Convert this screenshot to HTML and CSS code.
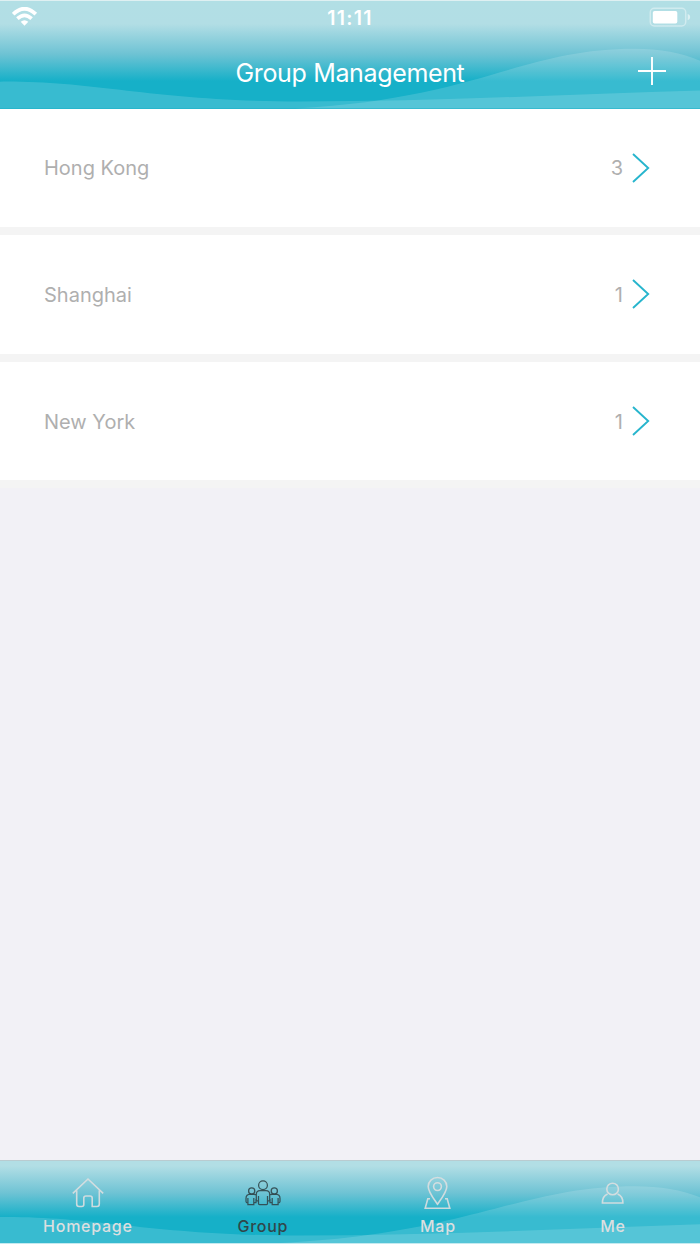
FILE: index.html
```
<!DOCTYPE html>
<html lang="en">
<head>
<meta charset="utf-8">
<title>Group Management</title>
<link rel="stylesheet" href="styles.css">
</head>
<body>
<div class="app">
  <header class="header">
    <svg class="waves" viewBox="0 0 700 108" preserveAspectRatio="none">
      <path d="M0 81C95 80 155 101 300 101C430 101 560 94 700 90V108H0Z"/>
      <path d="M295 108C480 98 520 48 635 48C660 48 682 52 700 60V108Z"/>
    </svg>
    <div class="status">
      <svg class="wifi" width="26" height="20" viewBox="0 0 26 20">
        <path class="arc" d="M1.2 7.2Q12.5 -3.8 23.8 7.2"/>
        <path class="arc" d="M5.4 11.7Q12.5 5.1 19.6 11.7"/>
        <path class="dot" d="M8.7 14.8Q12.5 11.8 16.3 14.8L12.5 18.8Z"/>
      </svg>
      <span class="time">11:11</span>
      <svg class="battery" width="42" height="20" viewBox="0 0 42 20">
        <rect class="shell" x="1.3" y="1.3" width="35.4" height="17.6" rx="4"/>
        <rect class="charge" x="3.8" y="4" width="24.5" height="12.5" rx="1.8"/>
        <path class="cap" d="M38.7 7Q41.2 7.5 41.2 10T38.7 13.3Z"/>
      </svg>
    </div>
    <div class="nav">
      <h1 class="title">Group Management</h1>
      <svg class="add" width="28" height="28" viewBox="0 0 28 28"><path d="M14 0V28M0 14H28"/></svg>
    </div>
  </header>
  <main class="list">
    <div class="row"><span class="name">Hong Kong</span><span class="count">3</span><svg class="chevron" width="18" height="30" viewBox="0 0 18 30"><path d="M1 1L16.2 15L1 29"/></svg></div>
    <div class="row"><span class="name">Shanghai</span><span class="count">1</span><svg class="chevron" width="18" height="30" viewBox="0 0 18 30"><path d="M1 1L16.2 15L1 29"/></svg></div>
    <div class="row"><span class="name">New York</span><span class="count">1</span><svg class="chevron" width="18" height="30" viewBox="0 0 18 30"><path d="M1 1L16.2 15L1 29"/></svg></div>
  </main>
  <nav class="tabs">
    <svg class="waves" viewBox="0 20 700 88" preserveAspectRatio="none">
      <path d="M0 80C95 79 155 100 300 100C430 100 560 93 700 88V108H0Z"/>
      <path d="M280 108C470 98 520 47 635 47C660 47 682 51 700 59V108Z"/>
    </svg>
    <a class="tab">
      <svg width="36" height="36" viewBox="0 0 36 36"><path d="M2.8 18.3L18 4L33.2 18.3M6.7 15.5V29Q6.7 31.5 9 31.5H11.8Q13.8 31.5 13.8 29.5V23Q13.8 21 16 21H20Q22.2 21 22.2 23V31.5H27Q29.3 31.5 29.3 29V15.5"/></svg>
      <span>Homepage</span>
    </a>
    <a class="tab active">
      <svg width="36" height="36" viewBox="0 0 36 36">
        <circle cx="18" cy="10.2" r="4.4"/><circle cx="6.7" cy="16" r="3.1"/><circle cx="29.3" cy="16" r="3.1"/>
        <path d="M13.5 20.9V28.5Q13.5 29.5 14.5 29.5H21.5Q22.5 29.5 22.5 28.5V20.9M13.5 25.9H12.3Q11.3 25.9 11.3 24.4V19.4Q11.3 15.5 15 15.5H21Q24.7 15.5 24.7 19.4V24.4Q24.7 25.9 23.7 25.9H22.5M11.3 19.7Q9 19.2 5.5 19.2Q1 19.4 1 23.4V26.4Q1 27.9 2.9 27.9V22.9M2.9 27.9V29.5H8.8V22.9M8.8 27.6H11V24M24.7 19.7Q27 19.2 30.5 19.2Q35 19.4 35 23.4V26.4Q35 27.9 33.1 27.9V22.9M33.1 27.9V29.5H27.2V22.9M27.2 27.6H25V24"/>
      </svg>
      <span>Group</span>
    </a>
    <a class="tab">
      <svg width="36" height="36" viewBox="0 0 36 36"><path d="M17.5 29.2C13.5 23.5 8.2 17 8.2 11.5A9.3 9 0 0 1 26.8 11.5C26.8 17 21.5 23.5 17.5 29.2ZM10 23.7H7.8L5.2 33.2H29.8L27.2 23.7H25"/><circle cx="17.5" cy="11.6" r="3.9"/></svg>
      <span>Map</span>
    </a>
    <a class="tab">
      <svg width="36" height="36" viewBox="0 0 36 36"><circle cx="17.6" cy="14" r="5.8"/><path d="M12.6 19C9 20.4 7.4 23.5 7.4 28H27.9C27.9 23.5 26.2 20.4 22.6 19"/></svg>
      <span>Me</span>
    </a>
  </nav>
</div>
</body>
</html>
```
FILE: styles.css
```
* { box-sizing: border-box; }
body { margin: 0; font-family: Inter, "Liberation Sans", sans-serif; background: #f2f1f6; }
.app { height: 1244px; display: flex; flex-direction: column; }
svg { display: block; flex: none; fill: none; }

.header {
  position: relative;
  height: 108.5px;
  border-top: 1px solid #dff0f2;
  background: linear-gradient(#b2dfe5 0, #b2dee5 23px, #6ec3d4 53px, #16b0c8 80px);
  color: #fff;
}
.waves { position: absolute; left: 0; bottom: 0; width: 100%; height: 100%; fill: #fff; fill-opacity: .15; }
.status { position: relative; height: 32px; padding: 6px 9px 0 12px; display: grid; grid-template-columns: 1fr auto 1fr; }
.arc { stroke: #fff; stroke-width: 3.7; }
.dot, .charge { fill: #fff; }
.shell { stroke: #fff; stroke-opacity: .4; stroke-width: 1.5; }
.cap { fill: #fff; fill-opacity: .55; }
.battery { justify-self: end; }
.time { font-size: 19.5px; line-height: 22px; font-weight: 600; letter-spacing: 1.3px; margin-right: 3px; }
.nav { position: relative; height: 75px; display: grid; grid-template-columns: 1fr auto 1fr; padding: 24px 34px 0; }
.title { grid-column: 2; margin: 0; font-size: 25px; line-height: 32px; font-weight: 400; letter-spacing: -.35px; }
.add { justify-self: end; stroke: #fff; stroke-width: 1.9; }

.list { flex: 1; }
.row {
  height: 126.67px;
  padding: 0 50px 0 44px;
  display: flex;
  align-items: center;
  background: #fff;
  border-bottom: 8px solid #f4f4f4;
  font-size: 20px;
  color: #afafaf;
}
.name { flex: 1; letter-spacing: 0; }
.name, .count { padding-top: 1px; }
.chevron { margin-left: 9px; stroke: #27b5cd; stroke-width: 1.9; }

.tabs {
  position: relative;
  height: 84px;
  display: flex;
  border-top: 1px solid #b9cbd0;
  border-bottom: 1px solid #c4eaf0;
  background: linear-gradient(#b2dee5 5px, #6ec3d4 32px, #16b0c8 56px);
}
.tab {
  position: relative;
  flex: 1;
  display: flex;
  flex-direction: column;
  align-items: center;
  padding-top: 14px;
  font-size: 16px;
  line-height: 20px;
  font-weight: 500;
  letter-spacing: .75px;
  color: #dcdfe0;
  gap: 5px;
}
.tab span { padding-left: .75px; }
.tab svg { stroke: currentColor; stroke-width: 1.6; stroke-opacity: .9; }
.tab.active { color: #31464a; }
.tab.active svg { stroke-width: 1.25; }
```
